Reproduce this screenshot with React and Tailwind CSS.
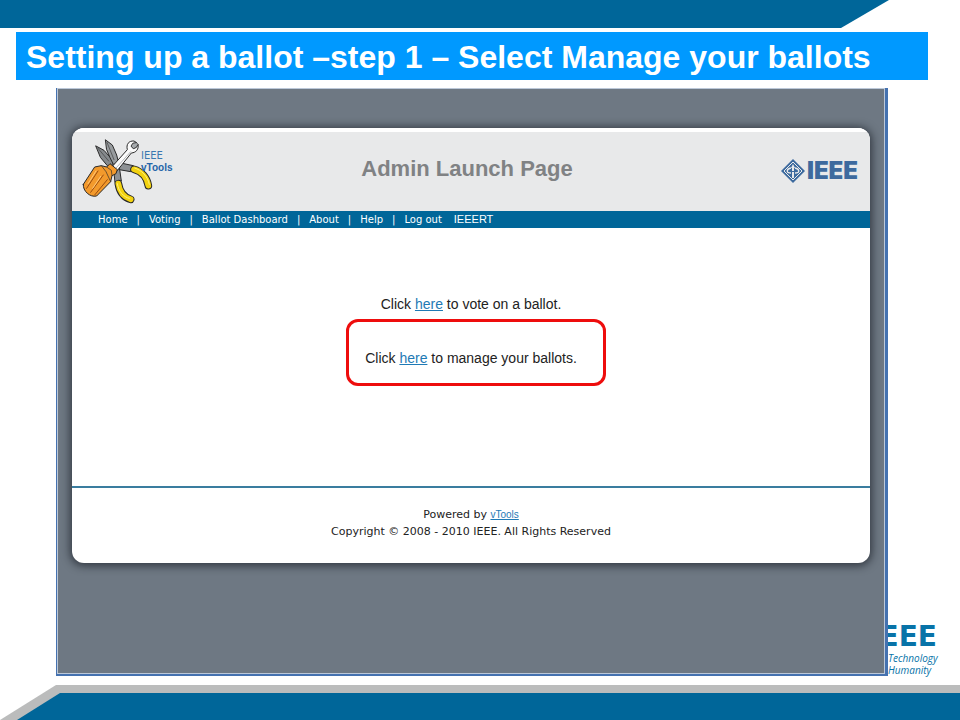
import React from "react";

const navItems = ["Home", "Voting", "Ballot Dashboard", "About", "Help", "Log out"];

function ToolsIcon() {
  return (
    <svg viewBox="12 12 213 195" className="h-[65px] w-[71px] shrink-0" aria-hidden="true">
      <g stroke="#2a2a2a" strokeWidth="3" strokeLinejoin="round" strokeLinecap="round">
        <path d="M54 33 L78 46 L106 78 L104 96 L88 92 L68 68 Z" fill="#85898c" />
        <path d="M83 15 L103 30 L116 60 L122 84 L106 88 L96 68 L86 44 Z" fill="#979b9e" />
        <path d="M60 40 L92 78 M87 22 L108 74" fill="none" strokeWidth="2" stroke="#3c3c3c" />
        <path d="M108 100 L124 96 L130 138 L112 142 Z" fill="#8d9194" />
        <path d="M128 84 L166 92 L158 110 L124 104 Z" fill="#8d9194" />
      </g>
      <g fill="none" strokeLinecap="round">
        <path d="M121 146 C125 172 138 187 158 193" stroke="#2a2a2a" strokeWidth="23" />
        <path d="M121 146 C125 172 138 187 158 193" stroke="#f3d20f" strokeWidth="17" />
        <path d="M118 146 C122 170 136 186 154 190" stroke="#fff07a" strokeWidth="3" />
        <path d="M168 103 C190 109 207 127 211 152" stroke="#2a2a2a" strokeWidth="23" />
        <path d="M168 103 C190 109 207 127 211 152" stroke="#f3d20f" strokeWidth="17" />
        <path d="M170 99 C190 105 209 123 214 148" stroke="#fff07a" strokeWidth="3" />
      </g>
      <g stroke="#2a2a2a" strokeWidth="3" strokeLinejoin="round" strokeLinecap="round">
        <path d="M96 102 L148 44 C144 28 152 17 168 18 L176 23 L165 25 L160 34 L166 41 L175 37 L180 28 C183 43 174 53 160 54 L112 114 Z" fill="#fbfbfb" />
        <path d="M108 106 L158 50" fill="none" stroke="#b4b7ba" strokeWidth="3" />
        <path d="M165 25 L176 23 L180 28 L175 37 L166 41 L160 34 Z" fill="#a6aaad" strokeWidth="2" />
        <path d="M16 148 L50 96 L70 92 L86 96 L96 86 L118 104 L114 116 L102 122 L98 140 L56 183 C36 188 14 168 16 148 Z" fill="#f39a2c" />
        <path d="M26 160 L60 108 M38 172 L76 120 M50 180 L88 134" fill="none" stroke="#9a4c0e" strokeWidth="3" />
        <path d="M86 96 L100 106 L102 122 M70 92 L84 110 L98 140" fill="none" strokeWidth="2" />
        <path d="M30 146 L54 108 M44 160 L68 124" fill="none" stroke="#ffc877" strokeWidth="3" />
      </g>
    </svg>
  );
}

function IeeeDiamond() {
  return (
    <svg viewBox="0 0 24 24" className="h-6 w-6 shrink-0" aria-hidden="true">
      <path d="M12 0 L24 12 L12 24 L0 12 Z" fill="#3d6a9e" />
      <path d="M12 3 L21 12 L12 21 L3 12 Z" fill="none" stroke="#e8e9ea" strokeWidth="1" />
      <path d="M12 5 L14 9 H13 V12 H11 V9 H10 Z M11 13 H13 V19 H11 Z" fill="#e8e9ea" />
      <path d="M10 9 C5 10 5 14 10 14 M14 9 C19 10 19 14 14 14" fill="none" stroke="#e8e9ea" strokeWidth="1.3" />
    </svg>
  );
}

function LaunchCard() {
  return (
    <div className="overflow-hidden rounded-xl bg-white shadow-[0_1px_9px_2px_rgba(20,25,32,0.65)]">
      <header className="grid h-[83px] grid-cols-[1fr_auto_1fr] items-center border-t-4 border-white bg-[#e8e9ea] pr-3 pl-[10px]">
        <div className="flex items-center">
          <ToolsIcon />
          <div className="-ml-3 pb-5 text-[10px] leading-3 text-[#3a78b0]">
            <div className="h-3 font-['DejaVu_Sans',Verdana,sans-serif]">IEEE</div>
            <div className="h-3 font-['Liberation_Sans',Arial,sans-serif] font-bold text-[#2464a8]">vTools</div>
          </div>
        </div>
        <h2 className="pr-1.5 pb-1.5 text-[22px] font-bold text-[#808284]">Admin Launch Page</h2>
        <div className="flex items-center justify-end pb-0.5 text-[#3d6a9e]">
          <IeeeDiamond />
          <span className="pl-0.5 font-[Inter,sans-serif] text-2xl leading-6 font-black">IEEE</span>
        </div>
      </header>
      <nav className="flex h-[17px] items-center bg-[#006699] pl-[26px] font-['DejaVu_Sans',Verdana,sans-serif] text-[10px] text-white">
        {navItems.map((item, i) => (
          <React.Fragment key={item}>
            {i > 0 && <span className="px-[9px]">|</span>}
            <a href="#" className="whitespace-nowrap">{item}</a>
          </React.Fragment>
        ))}
        <span className="pl-3 font-['Liberation_Sans',Arial,sans-serif] text-[11px]">IEEERT</span>
      </nav>
      <main className="flex h-[258px] flex-col items-center pt-[66px] text-sm leading-5 text-[#222]">
        <p>
          Click <a href="#" className="text-[#1f7ab5] underline">here</a> to vote on a ballot.
        </p>
        <div className="mt-[5px] ml-[10px] flex h-[67px] w-[260px] items-center justify-center rounded-xl border-3 border-[#ee0d0d] pt-2.5 pr-2.5">
          <p>
            Click <a href="#" className="text-[#1f7ab5] underline">here</a> to manage your ballots.
          </p>
        </div>
      </main>
      <footer className="h-[77px] border-t-2 border-[#3a7d9f] pt-[18px] text-center font-['DejaVu_Sans',Verdana,sans-serif] text-[11px] leading-[17px] text-[#222]">
        <p>
          Powered by{" "}
          <a href="#" className="font-['Liberation_Sans',Arial,sans-serif] text-[10px] text-[#1f7ab5] underline">vTools</a>
        </p>
        <p>Copyright © 2008 - 2010 IEEE. All Rights Reserved</p>
      </footer>
    </div>
  );
}

export default function App() {
  return (
    <div className="flex min-h-screen flex-col overflow-hidden bg-white font-['Liberation_Sans',Arial,sans-serif]">
      <div className="mr-[71px] h-7 bg-[#006699] [clip-path:polygon(0_0,100%_0,calc(100%-48px)_100%,0_100%)]" />
      <h1 className="mt-1 mr-8 ml-4 flex h-12 items-center bg-[#0099ff] px-[10px] pt-0.5 text-[32px] font-bold whitespace-nowrap text-white">
        Setting up a ballot –step 1 – Select Manage your ballots
      </h1>
      <div className="mt-2 mr-5 ml-14 flex items-end">
        <section className="h-[588px] min-w-0 flex-1 border-r-3 border-b-2 border-l border-[#4572b0] bg-[#6e7883]">
          <div className="h-full border border-[#bcc8d8] px-[14px] pt-[39px]">
            <LaunchCard />
          </div>
        </section>
        <aside className="w-[52px] shrink-0 text-[#0873a8]">
          <div className="flex h-7 justify-end overflow-hidden pr-[3px] font-['DejaVu_Sans',sans-serif] text-[28px] leading-7 font-bold">IEEE</div>
          <p className="pt-px font-['Open_Sans',sans-serif] text-[10px] leading-3 font-medium whitespace-nowrap italic">
            Technology
            <br />
            Humanity
          </p>
        </aside>
      </div>
      <div className="mt-auto h-[35px] bg-[#bbbcbc] [clip-path:polygon(56px_0,100%_0,100%_100%,0_100%)]">
        <div className="h-2" />
        <div className="h-[27px] bg-[#006699] [clip-path:polygon(60px_0,100%_0,100%_100%,17px_100%)]" />
      </div>
    </div>
  );
}
